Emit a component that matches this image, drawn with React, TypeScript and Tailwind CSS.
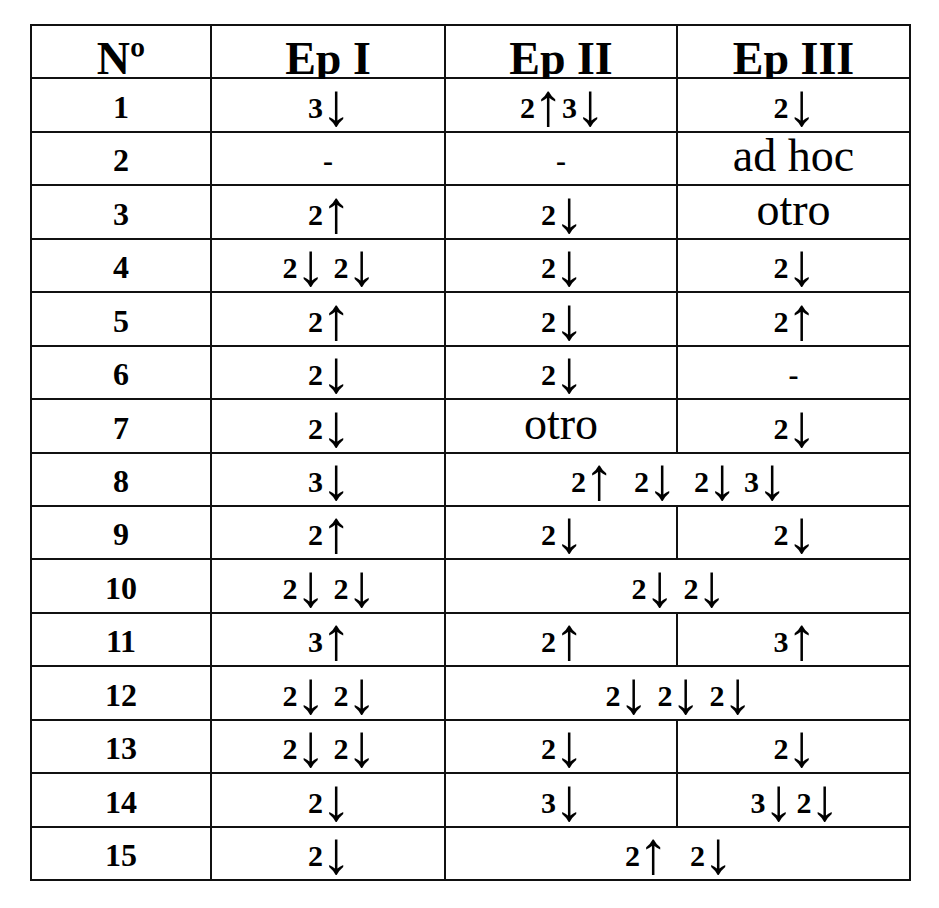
import React from "react";

type Cell = { t: string; word?: boolean; span?: boolean; gaps?: string[] };

function Marks({ text, gaps }: { text: string; gaps?: string[] }) {
  const toks = text.split(" ");
  return (
    <div>
      {toks.map((t, i) => (
        <React.Fragment key={i}>
          {t.split("").map((ch, j) =>
            ch === "↑" || ch === "↓" ? (
              <span
                key={j}
                className="font-normal text-[60px] leading-[0] align-[-7px] ml-[-2px] mr-[-3px]"
              >
                {ch}
              </span>
            ) : (
              <span key={j} className="font-bold text-[30px] leading-[0]">
                {ch}
              </span>
            )
          )}
          {i < toks.length - 1 && (
            <span className={"inline-block " + ((gaps && gaps[i]) || "w-[10px]")} />
          )}
        </React.Fragment>
      ))}
    </div>
  );
}

const rows: { n: string; c: Cell[] }[] = [
  { n: "1", c: [{ t: "3↓" }, { t: "2↑ 3↓", gaps: ["w-[2px]"] }, { t: "2↓" }] },
  { n: "2", c: [{ t: "-" }, { t: "-" }, { t: "ad hoc", word: true }] },
  { n: "3", c: [{ t: "2↑" }, { t: "2↓" }, { t: "otro", word: true }] },
  { n: "4", c: [{ t: "2↓ 2↓", gaps: ["w-[11px]"] }, { t: "2↓" }, { t: "2↓" }] },
  { n: "5", c: [{ t: "2↑" }, { t: "2↓" }, { t: "2↑" }] },
  { n: "6", c: [{ t: "2↓" }, { t: "2↓" }, { t: "-" }] },
  { n: "7", c: [{ t: "2↓" }, { t: "otro", word: true }, { t: "2↓" }] },
  {
    n: "8",
    c: [{ t: "3↓" }, { t: "2↑ 2↓ 2↓ 3↓", span: true, gaps: ["w-[23px]", "w-[20px]", "w-[10px]"] }],
  },
  { n: "9", c: [{ t: "2↑" }, { t: "2↓" }, { t: "2↓" }] },
  { n: "10", c: [{ t: "2↓ 2↓", gaps: ["w-[11px]"] }, { t: "2↓ 2↓", span: true, gaps: ["w-[12px]"] }] },
  { n: "11", c: [{ t: "3↑" }, { t: "2↑" }, { t: "3↑" }] },
  {
    n: "12",
    c: [{ t: "2↓ 2↓", gaps: ["w-[11px]"] }, { t: "2↓ 2↓ 2↓", span: true, gaps: ["w-[12px]", "w-[12px]"] }],
  },
  { n: "13", c: [{ t: "2↓ 2↓", gaps: ["w-[11px]"] }, { t: "2↓" }, { t: "2↓" }] },
  { n: "14", c: [{ t: "2↓" }, { t: "3↓" }, { t: "3↓ 2↓", gaps: ["w-[6px]"] }] },
  { n: "15", c: [{ t: "2↓" }, { t: "2↑ 2↓", span: true, gaps: ["w-[25px]"] }] },
];

const cellBase =
  "bg-white flex items-end justify-center leading-none text-[46px] whitespace-nowrap pb-[5px]";
const headBase =
  "bg-white flex items-end justify-center leading-[0.8] text-[46px] whitespace-nowrap font-bold";

export default function App() {
  return (
    <div className="w-[939px] h-[908px] bg-white pl-[30px] pt-[24px] font-['Liberation_Serif','Times_New_Roman',serif]">
      <div className="w-[881px] bg-[#111] p-[2px] grid grid-cols-[178px_232px_230px_231px] grid-rows-[repeat(16,51.45px)] gap-[2px] text-black">
        <div className={headBase}>Nº</div>
        <div className={headBase}>Ep I</div>
        <div className={headBase}>Ep II</div>
        <div className={headBase}>Ep III</div>
        {rows.map((r) => (
          <React.Fragment key={r.n}>
            <div className={cellBase}>
              <div>
                <span className="font-bold text-[32px] leading-[0]">{r.n}</span>
              </div>
            </div>
            {r.c.map((c, i) => (
              <div key={i} className={cellBase + (c.span ? " col-span-2" : "")}>
                {c.word ? (
                  <div className="font-normal">{c.t}</div>
                ) : (
                  <Marks text={c.t} gaps={c.gaps} />
                )}
              </div>
            ))}
          </React.Fragment>
        ))}
      </div>
    </div>
  );
}
